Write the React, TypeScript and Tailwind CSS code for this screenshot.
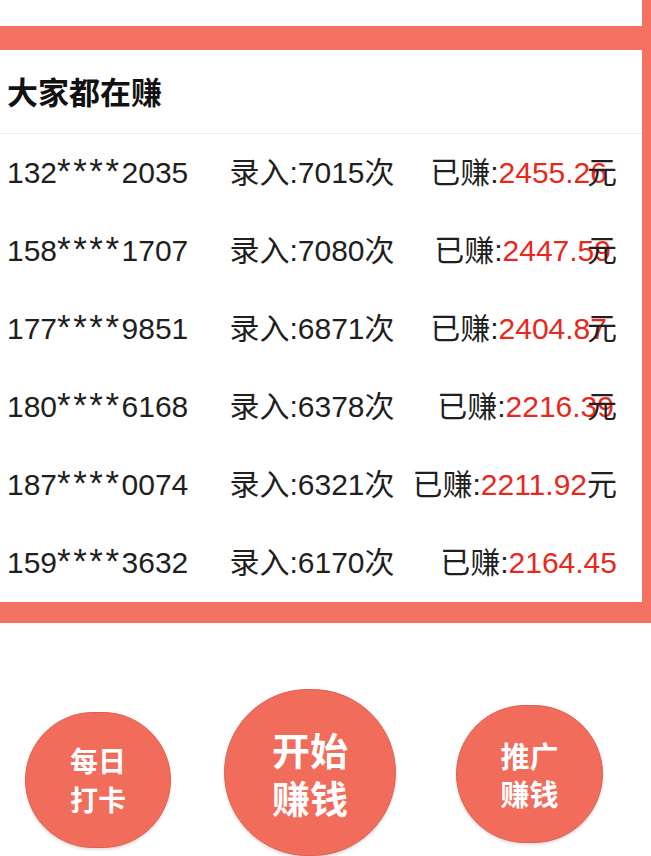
import React from "react";

type Row = { phone: string; count: string; amount: string; yuan: number | null };

// yuan: negative left margin (px) of the trailing 元; null = not shown
const rows: Row[] = [
  { phone: "132****2035", count: "7015", amount: "2455.26", yuan: -20 },
  { phone: "158****1707", count: "7080", amount: "2447.59", yuan: -24 },
  { phone: "177****9851", count: "6871", amount: "2404.87", yuan: -20 },
  { phone: "180****6168", count: "6378", amount: "2216.39", yuan: -27 },
  { phone: "187****0074", count: "6321", amount: "2211.92", yuan: 0 },
  { phone: "159****3632", count: "6170", amount: "2164.45", yuan: null },
];

const font = { fontFamily: '"Liberation Sans", "Noto Sans CJK SC", sans-serif' };

function Phone({ value }: { value: string }) {
  const [a, b] = value.split("****");
  return (
    <span>
      {a}
      <span className="text-[35px] leading-[0px] tracking-[2.5px]">****</span>
      {b}
    </span>
  );
}

export default function App() {
  return (
    <div
      className="w-[651px] h-[856px] overflow-hidden bg-white text-[#1f1f1f]"
      style={font}
    >
      <div className="bg-[#f37261] pr-[9px] pb-[21px]">
        {/* top card (cut off) */}
        <div className="h-[26px] overflow-hidden bg-white">
          <div className="-mt-[31px] flex text-[28px] leading-[34px] text-[#444]">
            <span className="ml-[25px]">总计</span>
            <span className="ml-[49px]">录入</span>
            <span className="ml-[69px]">排名</span>
            <span className="ml-[84px]">已赚</span>
          </div>
        </div>
        <div className="h-[24px]" />
        {/* earners card */}
        <div className="bg-white">
          <div className="h-[84px] flex items-center pl-[7px] border-b border-[#ececec]">
            <span
              className="text-[31px] font-bold text-[#111]"
              style={{ fontFamily: '"Noto Sans CJK SC", sans-serif' }}
            >
              大家都在赚
            </span>
          </div>
          <div className="pl-[7px] pr-[25px]">
            {rows.map((r) => (
              <div
                key={r.phone}
                className="h-[78px] grid grid-cols-[1fr_auto_1fr] items-center text-[30px] leading-[34px]"
              >
                <div className="justify-self-start">
                  <Phone value={r.phone} />
                </div>
                <div className="justify-self-center">录入:{r.count}次</div>
                <div className="justify-self-end whitespace-nowrap">
                  已赚:<span className="text-[#e8281c]">{r.amount}</span>
                  {r.yuan !== null && (
                    <span className="relative" style={{ marginLeft: r.yuan }}>
                      元
                    </span>
                  )}
                </div>
              </div>
            ))}
          </div>
        </div>
      </div>
      {/* buttons */}
      <div
        className="flex items-start pl-[25px]"
        style={{ fontFamily: '"Noto Sans CJK SC", sans-serif' }}
      >
        <div className="mt-[89px] w-[146px] h-[136px] rounded-full bg-[#f16c5b] border border-[#e2604f] shadow-[0_2px_3px_rgba(0,0,0,0.12)] flex flex-col items-center justify-center text-white font-bold text-[28px] leading-[39px]">
          <span>每日</span>
          <span>打卡</span>
        </div>
        <div className="ml-[53px] mt-[66px] w-[172px] h-[167px] rounded-full bg-[#f16c5b] border border-[#e2604f] shadow-[0_2px_3px_rgba(0,0,0,0.12)] flex flex-col items-center justify-center text-white font-bold text-[38px] leading-[48px]">
          <span>开始</span>
          <span>赚钱</span>
        </div>
        <div className="ml-[60px] mt-[82px] w-[147px] h-[138px] rounded-full bg-[#f16c5b] border border-[#e2604f] shadow-[0_2px_3px_rgba(0,0,0,0.12)] flex flex-col items-center justify-center text-white font-bold text-[29px] leading-[38px]">
          <span>推广</span>
          <span>赚钱</span>
        </div>
      </div>
    </div>
  );
}
